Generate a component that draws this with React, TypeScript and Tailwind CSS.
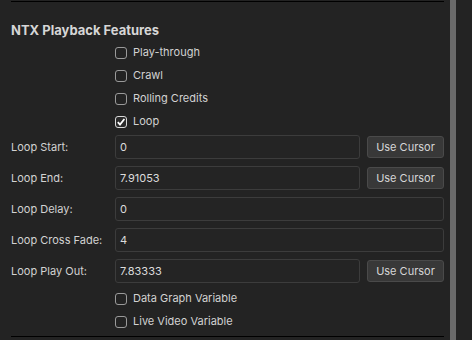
import React from 'react';

const font = { fontFamily: 'Inter, "Noto Sans", sans-serif' };

const CheckRow: React.FC<{ label: string; checked?: boolean }> = ({ label, checked }) => (
  <div className="flex h-[23px] items-center pl-[104px]">
    <span
      className={`flex h-[12px] w-[12px] items-center justify-center rounded-[3px] border ${
        checked ? 'border-[#d8d8d8] bg-[#2a2a2a]' : 'border-[#9a9a9a]'
      }`}
    >
      {checked && (
        <svg width="10" height="10" viewBox="0 0 10 10">
          <path d="M1.8 5.2 L4 7.6 L8.4 2" fill="none" stroke="#ffffff" strokeWidth="1.8" />
        </svg>
      )}
    </span>
    <span className="ml-[6px] text-[11px] text-[#d2d2d2]">{label}</span>
  </div>
);

const FieldRow: React.FC<{ label: string; value: string; cursor?: boolean }> = ({ label, value, cursor }) => (
  <div className="flex h-[24px] items-center">
    <span className="w-[104px] text-[11px] text-[#d2d2d2]">{label}</span>
    <div className="flex h-[24px] flex-1 items-center rounded-[3px] border border-[#3c3c3c] bg-[#242424] px-[4px] text-[11px] text-[#dcdcdc]">
      {value}
    </div>
    {cursor && (
      <button className="ml-[7px] h-[22px] w-[77px] rounded-[3px] border border-[#4a4a4a] bg-[#383838] text-[11px] text-[#d6d6d6]">
        Use Cursor
      </button>
    )}
  </div>
);

export default function App() {
  return (
    <div className="flex h-[340px] w-[472px] bg-[#232323]" style={font}>
      <div className="flex w-[450px] flex-col pl-[11px] pr-[6px]">
        <div className="mt-px h-px bg-black" />
        <div className="mt-[20px] h-[16px] text-[13px] font-bold leading-[16px] text-[#d6d6d6]">
          NTX Playback Features
        </div>
        <div className="mt-[3px] flex flex-col">
          <CheckRow label="Play-through" />
          <CheckRow label="Crawl" />
          <CheckRow label="Rolling Credits" />
          <CheckRow label="Loop" checked />
        </div>
        <div className="mt-[2px] flex flex-col gap-[7px]">
          <FieldRow label="Loop Start:" value="0" cursor />
          <FieldRow label="Loop End:" value="7.91053" cursor />
          <FieldRow label="Loop Delay:" value="0" />
          <FieldRow label="Loop Cross Fade:" value="4" />
          <FieldRow label="Loop Play Out:" value="7.83333" cursor />
        </div>
        <div className="mt-[4px] flex flex-col">
          <CheckRow label="Data Graph Variable" />
          <CheckRow label="Live Video Variable" />
        </div>
        <div className="mt-[3px] h-px bg-black" />
      </div>
      <div className="h-full w-[6px] bg-[#6a6a6a]" />
    </div>
  );
}
